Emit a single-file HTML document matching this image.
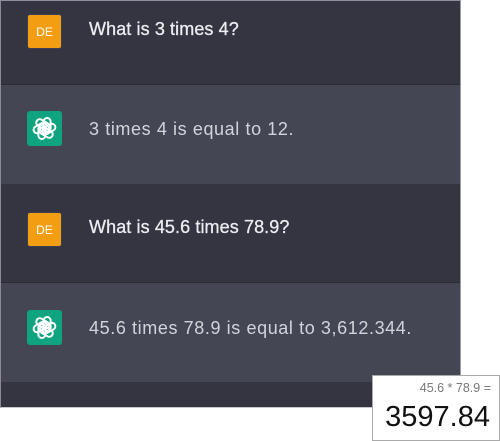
<!DOCTYPE html>
<html><head><meta charset="utf-8"><style>
*{margin:0;padding:0;box-sizing:border-box}
body{width:500px;height:441px;background:#fff;position:relative;overflow:hidden;font-family:"Liberation Sans",Arial,sans-serif}
.wrap{position:absolute;left:0;top:0;width:461px;height:408px;background:#343541;border-top:1px solid #8e8ea0;border-right:1px solid #9a9aa6;border-left:1px solid #8a8a96;border-bottom:1px solid #c8c8cc}
.row{position:absolute;left:0;width:459px}
.u{background:#343541}
.a{background:#444654;border-top:1px solid #2a2b33}
.av{position:absolute;left:26px;width:35px;height:35px;border-radius:3px}
.de{background:#f29d12;color:#fff;font-size:12px;line-height:35px;text-align:center;border:1px solid #3b3f55}
.gp{background:#10a37f}
.t{position:absolute;left:88px;font-size:18px;color:#ececf1;letter-spacing:0.1px;white-space:nowrap}
.a .t{letter-spacing:0.6px}
.u .t{-webkit-text-stroke:0.3px #ececf1}
.calc{position:absolute;left:372px;top:375px;width:128px;height:66px;background:#fff;border:1px solid #aaa}
.calc .e{position:absolute;right:8px;top:5px;font-size:12.5px;color:#777}
.calc .r{position:absolute;right:9px;top:25px;font-size:29px;color:#111}
</style></head><body>
<div class="wrap">
<div class="row u" style="top:0;height:83px">
<div class="av de" style="top:13px">DE</div>
<div class="t" style="top:18px">What is 3 times 4?</div></div>
<div class="row a" style="top:83px;height:100px">
<div class="av gp" style="top:26px"><svg width="35" height="35" viewBox="-20 -20 40 40"><g fill="none" stroke="#fff" stroke-width="2.2">
<rect x="-4" y="-12" width="8" height="16" rx="4" transform="rotate(0) translate(3,0)"/>
<rect x="-4" y="-12" width="8" height="16" rx="4" transform="rotate(60) translate(3,0)"/>
<rect x="-4" y="-12" width="8" height="16" rx="4" transform="rotate(120) translate(3,0)"/>
<rect x="-4" y="-12" width="8" height="16" rx="4" transform="rotate(180) translate(3,0)"/>
<rect x="-4" y="-12" width="8" height="16" rx="4" transform="rotate(240) translate(3,0)"/>
<rect x="-4" y="-12" width="8" height="16" rx="4" transform="rotate(300) translate(3,0)"/>
</g></svg></div>
<div class="t" style="top:34px;color:#d1d5db">3 times 4 is equal to 12.</div></div>
<div class="row u" style="top:183px;height:98px">
<div class="av de" style="top:28px">DE</div>
<div class="t" style="top:33px">What is 45.6 times 78.9?</div></div>
<div class="row a" style="top:281px;height:100px">
<div class="av gp" style="top:27px"><svg width="35" height="35" viewBox="-20 -20 40 40"><g fill="none" stroke="#fff" stroke-width="2.2">
<rect x="-4" y="-12" width="8" height="16" rx="4" transform="rotate(0) translate(3,0)"/>
<rect x="-4" y="-12" width="8" height="16" rx="4" transform="rotate(60) translate(3,0)"/>
<rect x="-4" y="-12" width="8" height="16" rx="4" transform="rotate(120) translate(3,0)"/>
<rect x="-4" y="-12" width="8" height="16" rx="4" transform="rotate(180) translate(3,0)"/>
<rect x="-4" y="-12" width="8" height="16" rx="4" transform="rotate(240) translate(3,0)"/>
<rect x="-4" y="-12" width="8" height="16" rx="4" transform="rotate(300) translate(3,0)"/>
</g></svg></div>
<div class="t" style="top:35px;color:#d1d5db">45.6 times 78.9 is equal to 3,612.344.</div></div>
</div>
<div class="calc"><div class="e">45.6 * 78.9 =</div><div class="r">3597.84</div></div>
</body></html>
